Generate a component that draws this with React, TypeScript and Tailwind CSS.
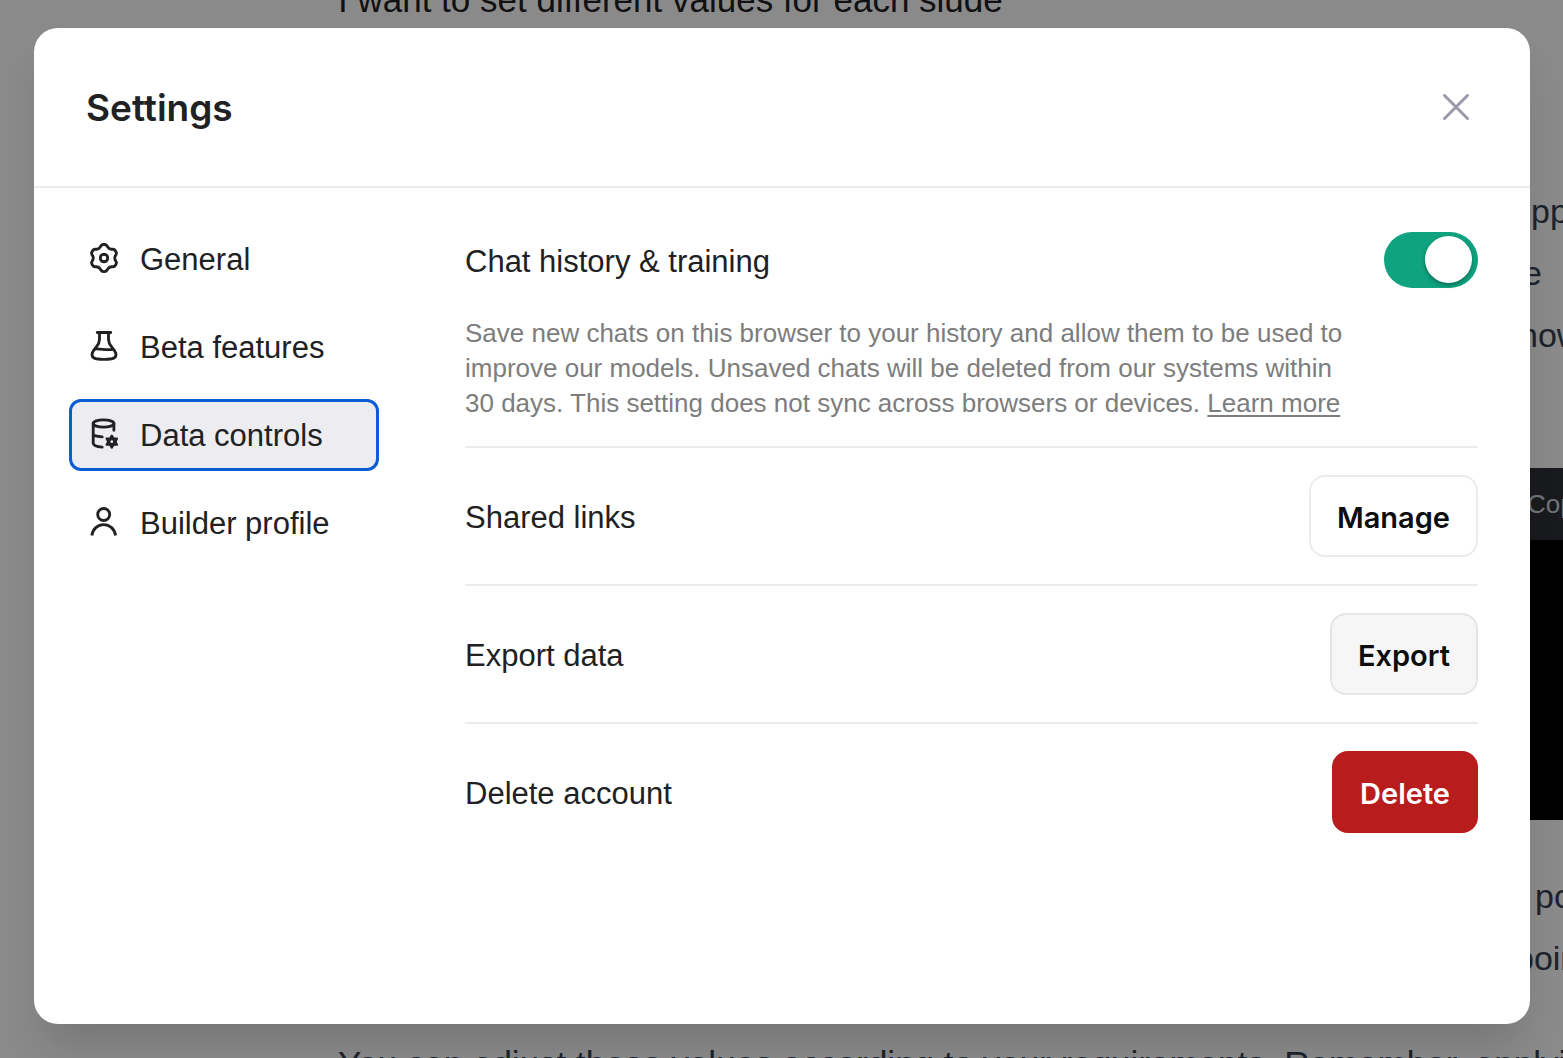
import { useState } from "react";
import type { ReactNode } from "react";

function Icon({ children }: { children: ReactNode }) {
  return (
    <svg
      viewBox="0 0 24 24"
      className="size-9 shrink-0"
      fill="none"
      stroke="currentColor"
      strokeWidth="1.9"
      strokeLinecap="round"
      strokeLinejoin="round"
      aria-hidden="true"
    >
      {children}
    </svg>
  );
}

const GearIcon = () => (
  <Icon>
    <path d="M11.6439 3C10.9352 3 10.2794 3.37508 9.92002 3.98596L9.49644 4.70605C8.96184 5.61487 7.98938 6.17632 6.93501 6.18489L6.09967 6.19168C5.39096 6.19744 4.73823 6.57783 4.38889 7.19451L4.03425 7.82057C3.68491 8.43724 3.68192 9.19226 4.0264 9.81169L4.43263 10.5421C4.94512 11.4636 4.94512 12.5843 4.43263 13.5058L4.0264 14.2363C3.68192 14.8557 3.68491 15.6107 4.03425 16.2274L4.38889 16.8534C4.73823 17.4701 5.39096 17.8505 6.09967 17.8563L6.93501 17.8631C7.98938 17.8716 8.96184 18.4331 9.49644 19.3419L9.92002 20.062C10.2794 20.6729 10.9352 21.048 11.6439 21.048H12.3561C13.0648 21.048 13.7206 20.6729 14.08 20.062L14.5035 19.3419C15.0381 18.4331 16.0106 17.8716 17.065 17.8631L17.9003 17.8563C18.609 17.8505 19.2617 17.4701 19.6111 16.8534L19.9657 16.2274C20.315 15.6107 20.318 14.8557 19.9736 14.2363L19.5673 13.5058C19.0548 12.5843 19.0548 11.4636 19.5673 10.5421L19.9736 9.81169C20.318 9.19226 20.315 8.43724 19.9657 7.82057L19.6111 7.19451C19.2617 6.57783 18.609 6.19744 17.9003 6.19168L17.065 6.18489C16.0106 6.17632 15.0381 5.61487 14.5035 4.70605L14.08 3.98596C13.7206 3.37508 13.0648 3 12.3561 3H11.6439Z" />
    <circle cx="12" cy="12" r="2.5" />
  </Icon>
);

const FlaskIcon = () => (
  <Icon>
    <path d="M7.5 3h9M9 3v4.6c0 2.2-.9 3.600-2.200 5.200C5.400 14.500 4 15.800 4 17.700c0 1.600 1.200 2.500 2.900 2.800 3.300.5 6.900.5 10.200 0 1.700-.3 2.900-1.200 2.900-2.800 0-1.900-1.400-3.200-2.800-4.900C15.900 11.200 15 9.800 15 7.600V3" />
    <path d="M6 14c3.500-.4 8.500 1.100 12 .2" />
  </Icon>
);

const DatabaseIcon = () => (
  <Icon>
    <ellipse cx="11.7" cy="5" rx="6.9" ry="2.400" />
    <path d="M4.800 5v13c0 1.600 2.500 2.500 6 2.700M18.600 5v4.500M4.800 12c0 1 2.300 1.700 6 1.900" />
    <path
      d="M17.200 13.100l1.200 2 2.300-.1-1.100 2.100 1.100 2.100-2.300-.1-1.200 2-1.200-2-2.300.1 1.100-2.100-1.100-2.100 2.300.1z"
      fill="currentColor"
      strokeWidth="1.400"
    />
    <circle cx="17.200" cy="17.100" r="0.900" fill="#ececf1" stroke="none" />
  </Icon>
);

const PersonIcon = () => (
  <Icon>
    <circle cx="11.800" cy="7" r="4" />
    <path d="M3.900 21c.6-4.300 3.800-7.300 7.900-7.300s7.300 3 7.900 7.300" strokeLinecap="butt" />
  </Icon>
);

const tabs = [
  { label: "General", icon: <GearIcon /> },
  { label: "Beta features", icon: <FlaskIcon /> },
  { label: "Data controls", icon: <DatabaseIcon /> },
  { label: "Builder profile", icon: <PersonIcon /> },
];

const actions = [
  { label: "Shared links", action: "Manage", style: "border-[#ececec] bg-white text-[#0d0d0d]" },
  { label: "Export data", action: "Export", style: "border-[#e5e5e5] bg-[#f6f6f6] text-[#0d0d0d]" },
  { label: "Delete account", action: "Delete", style: "border-[#b91c1c] bg-[#b91c1c] text-white" },
];

/* Conversation that shows around the edges of the dialog. */
function Conversation() {
  return (
    <main
      aria-hidden="true"
      className="flex h-full flex-col overflow-hidden bg-white text-[34px] leading-[62px] whitespace-nowrap text-gray-700"
    >
      <p className="-mt-[31px] ml-[338px] text-[35px] text-[#202123]">I want to set different values for each slude</p>
      <div className="mt-[149px] w-8 self-end">
        <p>pply</p>
        <p className="-ml-2">e</p>
        <p className="-ml-3">now</p>
      </div>
      <div className="mt-[102px] w-10 self-end bg-black">
        <p className="h-[72px] bg-[#2f3038] pl-1 text-[26px] leading-[72px] text-gray-300">Copy code</p>
        <div className="h-[280px]" />
      </div>
      <div className="mt-[45px] w-8 self-end">
        <p className="pl-1">point</p>
        <p className="-ml-4">point</p>
      </div>
      <p className="mt-11 ml-[338px] text-[35px]">
        You can adjust these values according to your requirements. Remember, applying
      </p>
    </main>
  );
}

export default function App() {
  const [active, setActive] = useState("Data controls");
  const [history, setHistory] = useState(true);

  return (
    <div className="relative h-screen overflow-hidden font-['Liberation_Sans',sans-serif]">
      <Conversation />
      <div className="absolute inset-0 flex bg-black/46 pt-7 pr-[33px] pb-[34px] pl-[34px]">
        <div
          role="dialog"
          aria-labelledby="settings-title"
          className="flex flex-1 flex-col rounded-3xl bg-white text-[#202123] shadow-[0_30px_40px_-10px_rgba(0,0,0,0.14)]"
        >
          <header className="flex items-center justify-between border-b-2 border-[#ececec] py-[54px] pr-[60px] pl-[52px]">
            <h2 id="settings-title" className="pt-0.5 font-['Inter',sans-serif] text-[37px] leading-[48px] font-semibold">
              Settings
            </h2>
            <button type="button" aria-label="Close" className="text-[#9a98aa]">
              <svg
                viewBox="0 0 28 28"
                className="size-7"
                fill="none"
                stroke="currentColor"
                strokeWidth="3"
                strokeLinecap="round"
                aria-hidden="true"
              >
                <path d="M2.500 2.500l23 23M25.500 2.500l-23 23" />
              </svg>
            </button>
          </header>

          <div className="flex flex-1 gap-[86px] pr-[52px] pl-[35px]">
            <nav className="flex w-[310px] shrink-0 flex-col gap-4 pt-[35px]">
              {tabs.map((tab) => (
                <button
                  key={tab.label}
                  type="button"
                  onClick={() => setActive(tab.label)}
                  className={
                    "flex h-[72px] items-center gap-[18px] rounded-xl border-3 pb-0.5 pl-[14px] text-left text-[31px] whitespace-nowrap " +
                    (active === tab.label ? "border-[#0b5cd5] bg-[#ececf1]" : "border-transparent")
                  }
                >
                  {tab.icon}
                  <span className="pt-1">{tab.label}</span>
                </button>
              ))}
            </nav>

            <section className="min-w-0 flex-1 pt-11 text-[31px]">
              <div className="border-b-2 border-[#ececec] pb-[25px]">
                <div className="flex items-center justify-between">
                  <label htmlFor="history" className="pt-1">
                    Chat history &amp; training
                  </label>
                  <span className="relative flex h-14 w-[94px]">
                    <input
                      id="history"
                      type="checkbox"
                      role="switch"
                      checked={history}
                      onChange={(event) => setHistory(event.target.checked)}
                      className="peer size-full appearance-none rounded-full bg-gray-300 checked:bg-[#10a37f]"
                    />
                    <span className="pointer-events-none absolute top-1 left-1 size-[47px] rounded-full bg-white shadow-[0_2px_4px_rgba(0,0,0,0.35)] peer-checked:left-[41px]" />
                  </span>
                </div>
                <p className="mt-7 max-w-[890px] text-[26px] leading-[35px] text-[#7d7d7d]">
                  Save new chats on this browser to your history and allow them to be used to improve our models.
                  Unsaved chats will be deleted from our systems within 30 days. This setting does not sync across
                  browsers or devices.{" "}
                  <a href="#learn-more" className="underline decoration-2 underline-offset-3">
                    Learn more
                  </a>
                </p>
              </div>

              {actions.map((row) => (
                <div
                  key={row.label}
                  className="flex items-center justify-between border-b-2 border-[#ececec] py-[27px] last:border-b-0"
                >
                  <span className="pt-1">{row.label}</span>
                  <button
                    type="button"
                    className={
                      "h-[82px] rounded-2xl border-2 px-[26px] pt-1 font-['Inter',sans-serif] text-[29px] font-semibold " +
                      row.style
                    }
                  >
                    {row.action}
                  </button>
                </div>
              ))}
            </section>
          </div>
        </div>
      </div>
    </div>
  );
}
